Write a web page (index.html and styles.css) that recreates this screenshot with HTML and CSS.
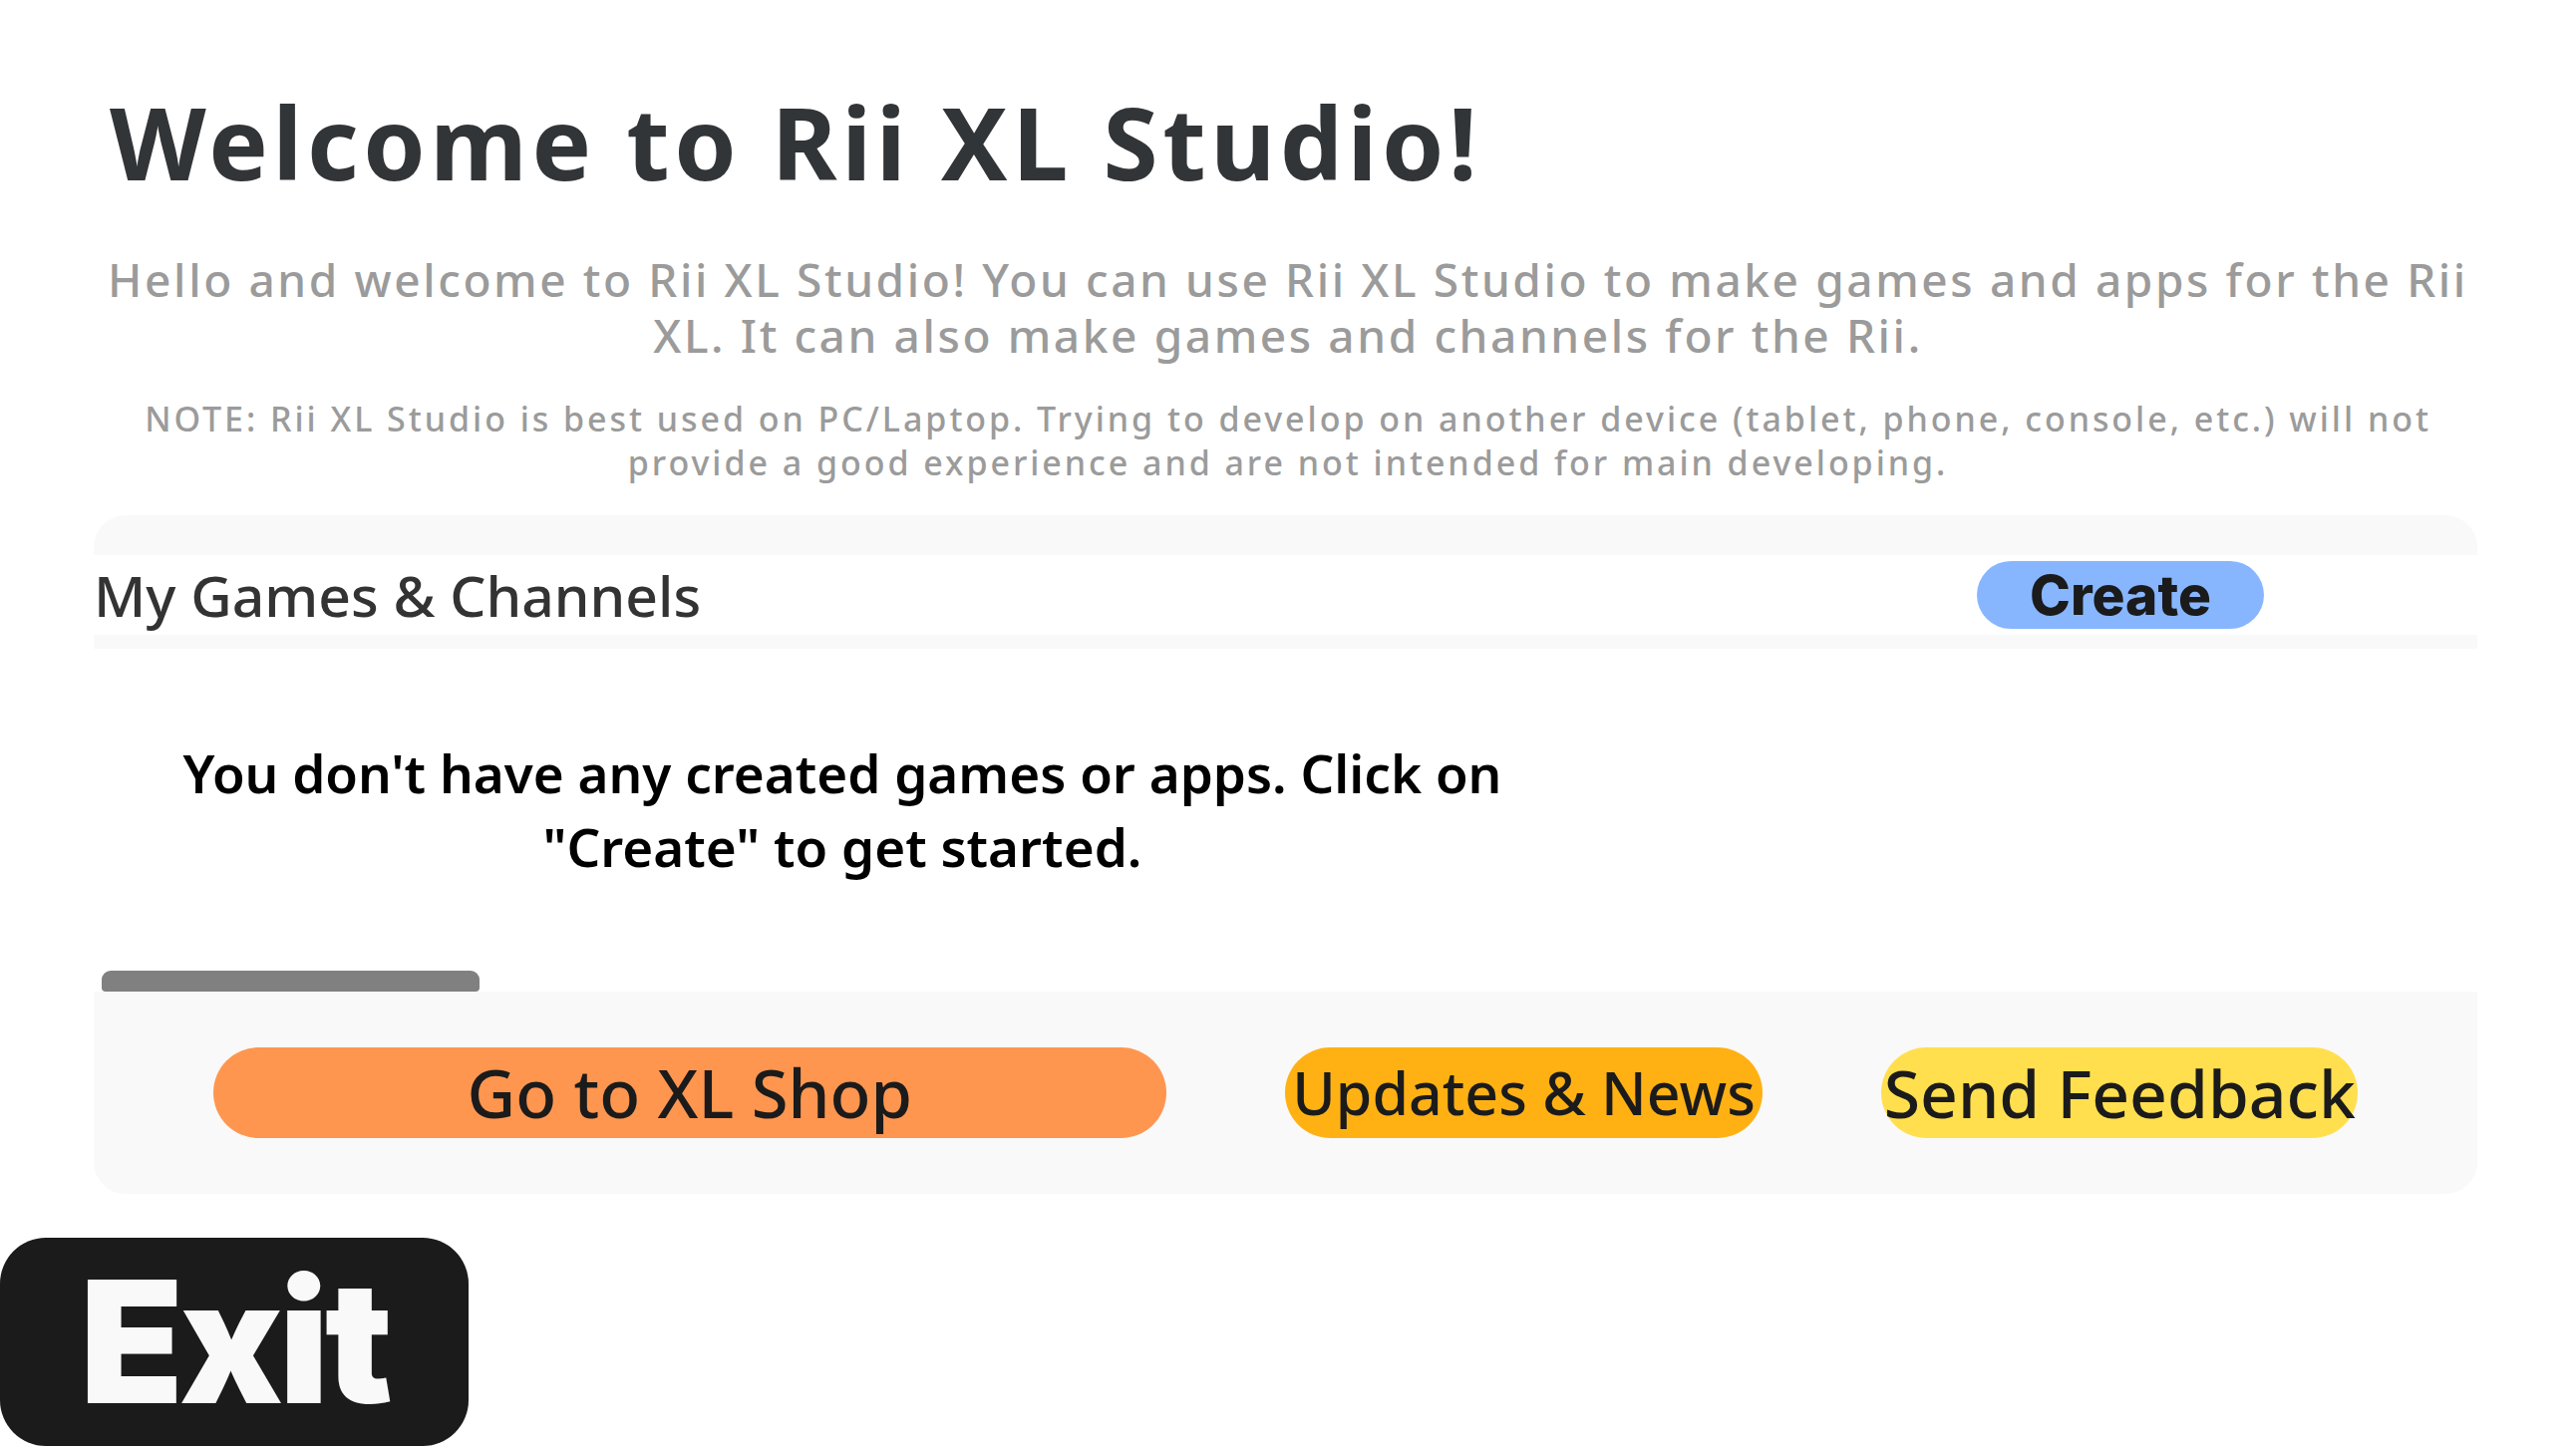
FILE: index.html
```html
<!DOCTYPE html>
<html lang="en">
<head>
<meta charset="utf-8">
<title>Rii XL Studio</title>
<link rel="stylesheet" href="styles.css">
</head>
<body>
  <main class="page">
    <h1 class="title">Welcome to Rii XL Studio!</h1>
    <p class="lead">Hello and welcome to Rii XL Studio! You can use Rii XL Studio to make games and apps for the Rii XL. It can also make games and channels for the Rii.</p>
    <p class="note">NOTE: Rii XL Studio is best used on PC/Laptop. Trying to develop on another device (tablet, phone, console, etc.) will not provide a good experience and are not intended for main developing.</p>

    <section class="panel">
      <div class="panel-cap"></div>
      <div class="panel-header">
        <h2 class="panel-title">My Games &amp; Channels</h2>
        <button class="btn-create">Create</button>
      </div>
      <div class="panel-strip"></div>
      <div class="panel-list">
        <p class="empty">You don't have any created games or apps. Click on "Create" to get started.</p>
      </div>
      <div class="scroll-track"><div class="scroll-thumb"></div></div>
      <div class="panel-footer">
        <button class="btn btn-shop">Go to XL Shop</button>
        <button class="btn btn-news">Updates &amp; News</button>
        <button class="btn btn-feedback">Send Feedback</button>
      </div>
    </section>

    <button class="btn-exit">Exit</button>
  </main>
</body>
</html>
```
FILE: styles.css
```css
* { box-sizing: border-box; }
html, body { margin: 0; padding: 0; background: #ffffff; }
body { font-family: "Noto Sans", "Open Sans", sans-serif; }

.page {
  width: 2584px;
  display: flex;
  flex-direction: column;
}

.title {
  margin: 82px 0 0 110px;
  font-family: "Noto Sans", sans-serif;
  font-weight: 700;
  font-size: 100px;
  line-height: 120px;
  letter-spacing: 4.6px;
  color: #323538;
}

.lead {
  margin: 50px auto 0;
  max-width: 2400px;
  text-align: center;
  font-family: "Noto Sans", sans-serif;
  font-weight: 500;
  font-size: 46px;
  line-height: 56px;
  letter-spacing: 2.6px;
  color: #9b9b9b;
}

.note {
  margin: 34px auto 0;
  max-width: 2330px;
  text-align: center;
  font-family: "Noto Sans", sans-serif;
  font-weight: 500;
  font-size: 34px;
  line-height: 44px;
  letter-spacing: 2.95px;
  color: #9b9b9b;
}

.panel {
  margin: 31px 0 0 94px;
  width: 2391px;
  display: flex;
  flex-direction: column;
}

.panel-cap {
  height: 40px;
  background: #f9f9f9;
  border-radius: 32px 32px 0 0;
}

.panel-header {
  height: 80px;
  background: #ffffff;
  display: flex;
  align-items: center;
  justify-content: space-between;
}

.panel-title {
  margin: 0;
  font-family: "Noto Sans", sans-serif;
  font-weight: 500;
  font-size: 57px;
  line-height: 80px;
  color: #333333;
}

.btn-create {
  margin-right: 214px;
  width: 288px;
  height: 68px;
  border: none;
  border-radius: 34px;
  background: #87b6ff;
  color: #1b1b1b;
  font-family: "Inter", sans-serif;
  font-weight: 800;
  font-size: 55px;
  line-height: 68px;
  padding: 0;
}

.panel-strip {
  height: 14px;
  background: #f9f9f9;
}

.panel-list {
  height: 323px;
  display: flex;
  align-items: center;
}

.empty {
  margin: 0;
  width: 1502px;
  text-align: center;
  font-family: "Noto Sans", sans-serif;
  font-weight: 600;
  font-size: 53px;
  line-height: 74px;
  color: #000000;
}

.scroll-track {
  height: 21px;
  padding-left: 8px;
}

.scroll-thumb {
  width: 379px;
  height: 21px;
  background: #808080;
  border-radius: 9px 9px 4px 4px;
}

.panel-footer {
  height: 203px;
  background: #f9f9f9;
  border-radius: 0 0 32px 32px;
  display: flex;
  align-items: center;
  justify-content: space-evenly;
}

.btn {
  height: 91px;
  border: none;
  border-radius: 46px;
  padding: 0;
  color: #1b1b1b;
  font-family: "Noto Sans", sans-serif;
  font-weight: 500;
  line-height: 89px;
  white-space: nowrap;
}

.btn-shop { width: 40%; background: #ff9650; font-size: 67px; }
.btn-news { width: 20%; background: #ffb114; font-size: 59px; }
.btn-feedback { width: 20%; background: #ffdf4e; font-size: 66px; }

.btn-exit {
  margin-top: 44px;
  align-self: flex-start;
  width: 470px;
  height: 209px;
  border: none;
  border-radius: 46px;
  background: #1b1b1b;
  color: #f9f9f9;
  font-family: "Inter", sans-serif;
  font-weight: 900;
  font-size: 170px;
  line-height: 209px;
  letter-spacing: -4px;
  text-align: left;
  padding: 0 0 0 80px;
}
```
